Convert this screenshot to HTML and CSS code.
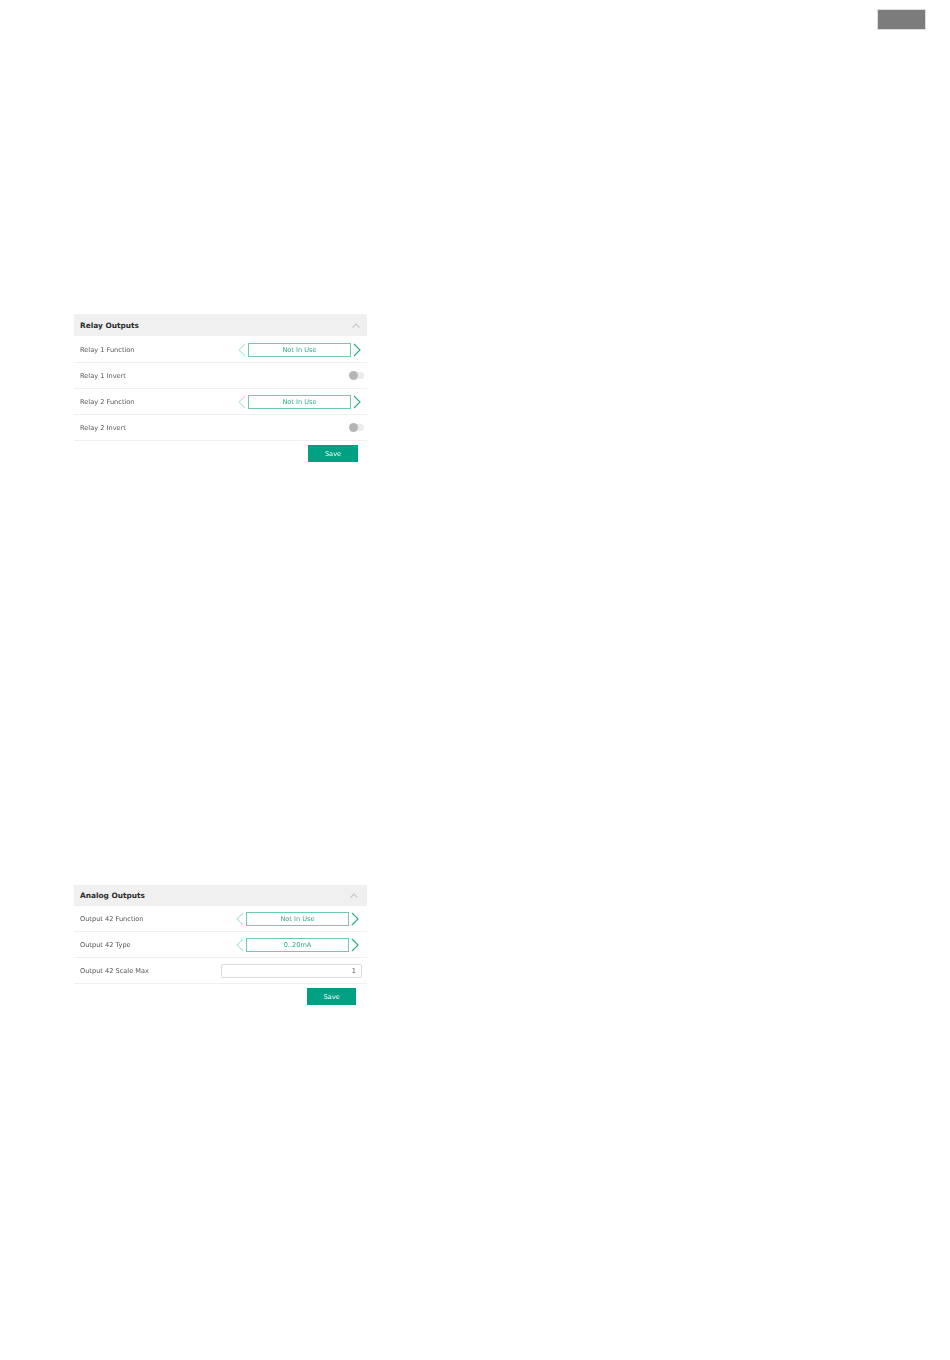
FILE: index.html
```html
<!DOCTYPE html>
<html lang="en">
<head>
  <meta charset="UTF-8">
  <title>Outputs</title>
  <link rel="stylesheet" href="styles.css">
</head>
<body>
  <div class="topbar">
    <div class="top-button"></div>
  </div>

  <div class="panel relay-panel">
    <div class="panel-header">
      <span>Relay Outputs</span>
      <svg class="collapse" width="8" height="5" viewBox="0 0 8 5"><path d="M0.5 4.5 L4 1 L7.5 4.5"/></svg>
    </div>
    <div class="row">
      <span class="label">Relay 1 Function</span>
      <div class="stepper">
        <svg class="arrow prev" width="8" height="14" viewBox="0 0 8 14"><path d="M7 1 L1 7 L7 13"/></svg>
        <div class="value">Not In Use</div>
        <svg class="arrow next" width="8" height="14" viewBox="0 0 8 14"><path d="M1 1 L7 7 L1 13"/></svg>
      </div>
    </div>
    <div class="row">
      <span class="label">Relay 1 Invert</span>
      <div class="toggle"><div class="knob"></div></div>
    </div>
    <div class="row">
      <span class="label">Relay 2 Function</span>
      <div class="stepper">
        <svg class="arrow prev" width="8" height="14" viewBox="0 0 8 14"><path d="M7 1 L1 7 L7 13"/></svg>
        <div class="value">Not In Use</div>
        <svg class="arrow next" width="8" height="14" viewBox="0 0 8 14"><path d="M1 1 L7 7 L1 13"/></svg>
      </div>
    </div>
    <div class="row">
      <span class="label">Relay 2 Invert</span>
      <div class="toggle"><div class="knob"></div></div>
    </div>
    <div class="actions">
      <button class="save">Save</button>
    </div>
  </div>

  <div class="panel analog-panel">
    <div class="panel-header">
      <span>Analog Outputs</span>
      <svg class="collapse" width="8" height="5" viewBox="0 0 8 5"><path d="M0.5 4.5 L4 1 L7.5 4.5"/></svg>
    </div>
    <div class="row">
      <span class="label">Output 42 Function</span>
      <div class="stepper">
        <svg class="arrow prev" width="8" height="14" viewBox="0 0 8 14"><path d="M7 1 L1 7 L7 13"/></svg>
        <div class="value">Not In Use</div>
        <svg class="arrow next" width="8" height="14" viewBox="0 0 8 14"><path d="M1 1 L7 7 L1 13"/></svg>
      </div>
    </div>
    <div class="row">
      <span class="label">Output 42 Type</span>
      <div class="stepper">
        <svg class="arrow prev" width="8" height="14" viewBox="0 0 8 14"><path d="M7 1 L1 7 L7 13"/></svg>
        <div class="value">0..20mA</div>
        <svg class="arrow next" width="8" height="14" viewBox="0 0 8 14"><path d="M1 1 L7 7 L1 13"/></svg>
      </div>
    </div>
    <div class="row">
      <span class="label">Output 42 Scale Max</span>
      <input class="number" type="text" value="1">
    </div>
    <div class="actions">
      <button class="save">Save</button>
    </div>
  </div>
</body>
</html>
```

FILE: styles.css
```css
body {
  font-family: "DejaVu Sans", Verdana, sans-serif;
  font-size: 6.6px;
  background: white;
  color: #555;
  margin: 0;
  height: 1360px;
  overflow: hidden;
}
.topbar {
  display: flex;
  justify-content: flex-end;
  padding: 10px 25px 0 0;
}
.top-button {
  width: 47px;
  height: 19px;
  background: #7d7c7c;
  box-shadow: 0 0 0 1px #dedede;
}
.panel {
  width: 293px;
  margin-left: 74px;
  will-change: opacity;
}
.relay-panel {
  margin-top: 285px;
}
.analog-panel {
  margin-top: 423px;
}
.panel-header {
  height: 22px;
  background: #f0f0f0;
  padding: 0 7px 0 6px;
  display: flex;
  align-items: center;
  justify-content: space-between;
  font-size: 7.4px;
  font-weight: bold;
  color: #2b2b2b;
}
.relay-panel .panel-header {
  margin-bottom: 1px;
}
.analog-panel .panel-header {
  height: 20px;
  padding-bottom: 1px;
  padding-right: 9px;
}
.collapse path {
  fill: none;
  stroke: #c8c8c8;
  stroke-width: 1.2;
}
.row {
  height: 25px;
  border-bottom: 1px solid #f0f0f0;
  padding: 0 6px;
  display: flex;
  align-items: center;
  justify-content: space-between;
}
.stepper {
  display: flex;
  align-items: center;
  gap: 2px;
}
.analog-panel .stepper {
  margin-right: 2px;
}
.arrow path {
  fill: none;
  stroke-width: 1.1;
}
.arrow.prev path {
  stroke: #bfe6da;
}
.arrow.next path {
  stroke: #2fa98c;
}
.value {
  width: 101px;
  height: 12px;
  line-height: 12px;
  border: 1px solid #6fcab4;
  text-align: center;
  color: #2fa98c;
}
.toggle {
  width: 14px;
  height: 7px;
  background: #ececec;
  border-radius: 4px;
  position: relative;
  margin-right: -3px;
}
.knob {
  position: absolute;
  left: -1px;
  top: -1px;
  width: 9px;
  height: 9px;
  border-radius: 50%;
  background: #b5b5b5;
}
.number {
  width: 134px;
  height: 12px;
  border: 1px solid #dcdcdc;
  border-radius: 2px;
  padding: 0 5px 0 0;
  margin: 0 -1px 0 0;
  font-family: inherit;
  font-size: 6.6px;
  color: #555;
  text-align: right;
}
.actions {
  display: flex;
  justify-content: flex-end;
  padding: 4px 9px 0 0;
}
.analog-panel .actions {
  padding-right: 11px;
}
.save {
  width: 50px;
  height: 17px;
  border: 0;
  padding: 0;
  background: #00a082;
  color: white;
  font-family: inherit;
  font-size: 6.6px;
}
.analog-panel .save {
  width: 49px;
}
```
